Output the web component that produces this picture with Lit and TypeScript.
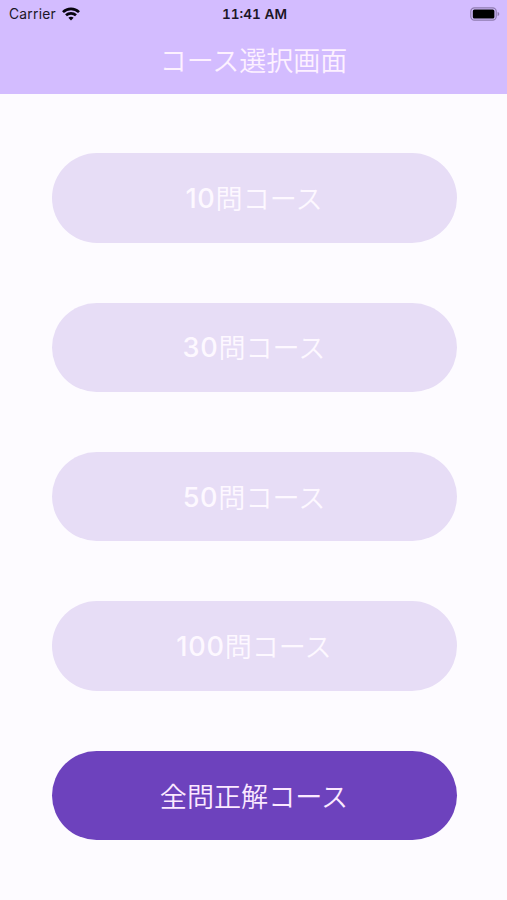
import { LitElement, html, css } from "lit";
import { customElement, property } from "lit/decorators.js";

@customElement("status-bar")
class StatusBar extends LitElement {
  static styles = css`
    :host {
      display: grid;
      grid-template-columns: 1fr auto 1fr;
      align-items: center;
      height: 27px;
      padding: 0 7px 0 9px;
      font: 400 13.8px/27px Inter, "Liberation Sans", sans-serif;
      color: #1c1626;
    }
    .carrier { display: flex; align-items: center; gap: 6px; letter-spacing: 0.25px; }
    .carrier span { padding-top: 1px; }
    .time {
      font-weight: 600;
      font-size: 13.6px;
      font-variant-numeric: tabular-nums;
      padding-top: 1px;
    }
    .battery { justify-self: end; }
    svg { display: block; }
  `;
  render() {
    return html`
      <div class="carrier">
        <span>Carrier</span>
        <svg width="18" height="14" viewBox="0 0 18 14" fill="none" stroke="#08040e" stroke-width="2.7">
          <path d="M1 5.1C5.4.8 12.6.8 17 5.1" />
          <path d="M4 8.3c2.8-2.6 7.2-2.6 10 0" />
          <path d="M6.4 10.7c1.5-1.3 3.7-1.3 5.2 0L9 13.5z" fill="#08040e" stroke="none" />
        </svg>
      </div>
      <span class="time">11:41 AM</span>
      <svg class="battery" width="30" height="14" viewBox="0 0 30 14">
        <rect x=".8" y=".8" width="25.4" height="12.4" rx="3.6" fill="none" stroke="#8f7bb0" stroke-width="1.2" />
        <rect x="2.8" y="2.5" width="21.6" height="9" rx="1.6" fill="#000" />
        <path d="M27.6 5c2.2.6 2.2 3.4 0 4z" fill="#8f7bb0" />
      </svg>
    `;
  }
}

@customElement("course-button")
class CourseButton extends LitElement {
  @property() count = "";
  @property() label = "";
  @property({ type: Boolean, reflect: true }) active = false;

  static styles = css`
    :host { display: block; }
    .pill {
      display: flex;
      align-items: center;
      justify-content: center;
      box-sizing: border-box;
      width: 100%;
      height: 89.4px;
      margin: 0;
      padding: 0;
      border: 0;
      border-radius: 45px;
      background: #e7ddf6;
      color: #fdf8ff;
      font: 350 27.1px/40px "Noto Sans CJK JP", sans-serif;
    }
    :host([active]) .pill { background: #6d42bd; color: #fbe9ff; }
    .count {
      font-family: Inter, sans-serif;
      font-weight: 450;
      letter-spacing: 0.7px;
      padding-top: 2px;
    }
  `;
  render() {
    return html`<button class="pill">
      ${this.count ? html`<span class="count">${this.count}</span>` : null}<span>${this.label}</span>
    </button>`;
  }
}

@customElement("app-root")
class AppRoot extends LitElement {
  static styles = css`
    :host {
      display: flex;
      flex-direction: column;
      height: 900px;
      background: #fdfbff;
    }
    .header { height: 93.5px; background: #d3bcff; }
    .title {
      margin: 0;
      text-align: center;
      color: #fdf1ff;
      font: 350 27px/66px "Noto Sans CJK JP", sans-serif;
    }
    .courses {
      display: flex;
      flex-direction: column;
      gap: 60px;
      padding: 59.8px 50.5px 0 51.5px;
    }
  `;
  private courses = ["10", "30", "50", "100"];
  render() {
    return html`
      <header class="header">
        <status-bar></status-bar>
        <h1 class="title">コース選択画面</h1>
      </header>
      <main class="courses">
        ${this.courses.map((n) => html`<course-button count=${n} label="問コース"></course-button>`)}
        <course-button active label="全問正解コース"></course-button>
      </main>
    `;
  }
}
